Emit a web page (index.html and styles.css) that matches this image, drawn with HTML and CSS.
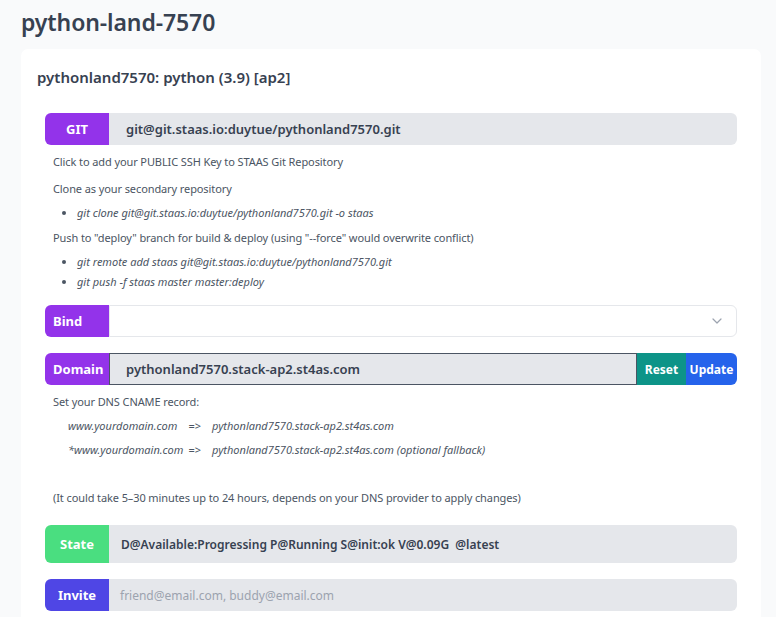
FILE: index.html
```html
<!DOCTYPE html>
<html>
<head>
<meta charset="utf-8">
<link rel="stylesheet" href="styles.css">
</head>
<body>
<h1 class="page-title">python-land-7570</h1>
<div class="card">
  <h2 class="card-title">pythonland7570: python (3.9) [ap2]</h2>
  <div class="content">
    <div class="row">
      <span class="label label-purple label-center">GIT</span>
      <div class="field field-gray field-bold">git@git.staas.io:duytue/pythonland7570.git</div>
    </div>
    <p class="note first">Click to add your PUBLIC SSH Key to STAAS Git Repository</p>
    <p class="note">Clone as your secondary repository</p>
    <ul class="cmds">
      <li>git clone git@git.staas.io:duytue/pythonland7570.git -o staas</li>
    </ul>
    <p class="note tight">Push to "deploy" branch for build &amp; deploy (using "--force" would overwrite conflict)</p>
    <ul class="cmds">
      <li>git remote add staas git@git.staas.io:duytue/pythonland7570.git</li>
      <li class="close">git push -f staas master master:deploy</li>
    </ul>

    <div class="row row-bind">
      <span class="label label-purple label-left">Bind</span>
      <div class="field field-select">
        <svg class="chev" width="10" height="6" viewBox="0 0 10 6"><path d="M1 1l4 4 4-4" fill="none" stroke="#9ca3af" stroke-width="1.2" stroke-linecap="round" stroke-linejoin="round"/></svg>
      </div>
    </div>

    <div class="row row-domain">
      <span class="label label-purple label-left">Domain</span>
      <div class="field field-gray field-bold field-focus">pythonland7570.stack-ap2.st4as.com</div>
      <button class="btn btn-teal">Reset</button>
      <button class="btn btn-blue">Update</button>
    </div>

    <p class="note first">Set your DNS CNAME record:</p>
    <div class="cname">
      <span class="src">www.yourdomain.com</span><span class="arrow">=&gt;</span><span class="dst">pythonland7570.stack-ap2.st4as.com</span>
      <span class="src">*www.yourdomain.com</span><span class="arrow">=&gt;</span><span class="dst">pythonland7570.stack-ap2.st4as.com (optional fallback)</span>
    </div>
    <p class="note wait">(It could take 5–30 minutes up to 24 hours, depends on your DNS provider to apply changes)</p>

    <div class="row row-state">
      <span class="label label-green label-center">State</span>
      <div class="field field-gray field-bold field-state">D@Available:Progressing P@Running S@init:ok V@0.09G&nbsp; @latest</div>
    </div>

    <div class="row row-invite">
      <span class="label label-indigo label-center">Invite</span>
      <div class="field field-gray field-placeholder">friend@email.com, buddy@email.com</div>
    </div>
  </div>
</div>
</body>
</html>
```
FILE: styles.css
```css
* { box-sizing: border-box; }
html, body { margin: 0; padding: 0; }
body {
  background: #f9fafb;
  font-family: "Noto Sans", "Open Sans", sans-serif;
  color: #374151;
  padding: 0 15px 0 21px;
  height: 617px;
  overflow: hidden;
}
.page-title {
  margin: 0;
  padding-top: 6px;
  font-size: 23px;
  line-height: 32px;
  font-weight: 600;
  color: #374151;
  letter-spacing: -0.1px;
}
.card {
  margin-top: 11px;
  background: #fff;
  border-radius: 7px;
  padding: 16px 16px 30px;
  min-height: 600px;
}
.card-title {
  margin: 0;
  font-size: 15px;
  line-height: 24px;
  font-weight: 600;
  color: #374151;
}
.content {
  margin: 24px 8px 0;
}
.row {
  display: flex;
  height: 32px;
  border-radius: 6px;
}
.label {
  flex: 0 0 64px;
  display: flex;
  align-items: center;
  color: #fff;
  font-weight: 700;
  font-size: 13px;
  border-radius: 6px 0 0 6px;
}
.label-center { justify-content: center; }
.label-left { padding-left: 8px; }
.label-purple { background: #9333ea; }
.label-green { background: #4ade80; }
.label-indigo { background: #4f46e5; }
.field {
  flex: 1;
  display: flex;
  align-items: center;
  padding-left: 17px;
  font-size: 13px;
  border-radius: 0 6px 6px 0;
}
.field-gray { background: #e5e7eb; }
.field-bold { font-weight: 600; color: #374151; }
.field-select {
  background: #fff;
  border: 1px solid #e5e7eb;
  justify-content: flex-end;
  padding-right: 14px;
}
.field-focus {
  border: 1px solid #4b5563;
  border-radius: 0;
  padding-left: 16px;
}
.field-state { padding-left: 12px; font-size: 12px; }
.field-placeholder { color: #9ca3af; padding-left: 11px; font-size: 12px; }
.btn {
  border: 0;
  margin: 0;
  color: #fff;
  font-family: inherit;
  font-weight: 700;
  font-size: 12px;
  padding: 0;
}
.btn-teal { background: #0d9488; width: 49px; }
.btn-blue { background: #2563eb; width: 51px; border-radius: 0 6px 6px 0; }

.note {
  margin: 9px 0 0;
  padding-left: 8px;
  font-size: 11px;
  letter-spacing: -0.1px;
  line-height: 18px;
  color: #4b5563;
}
.note.first { margin-top: 8px; }
.note.tight { margin-top: 7px; }
.cmds {
  margin: 6px 0 0;
  padding-left: 32px;
  font-size: 11px;
  line-height: 18px;
  font-style: italic;
  color: #4b5563;
}
.cmds li { margin-top: 0; }
.cmds li + li { margin-top: 2px; }
.row-bind { margin-top: 14px; }
.row-domain { margin-top: 16px; }
.cname {
  display: grid;
  grid-template-columns: auto auto auto;
  justify-content: start;
  row-gap: 6px;
  margin: 6px 0 0 23px;
  font-size: 11px;
  line-height: 18px;
  font-style: italic;
  color: #4b5563;
}
.arrow { padding: 0 11px 0 5px; font-style: normal; }
.wait { margin-top: 30px; }
.row-state { margin-top: 18px; height: 38px; }
.row-invite { margin-top: 16px; }
```
